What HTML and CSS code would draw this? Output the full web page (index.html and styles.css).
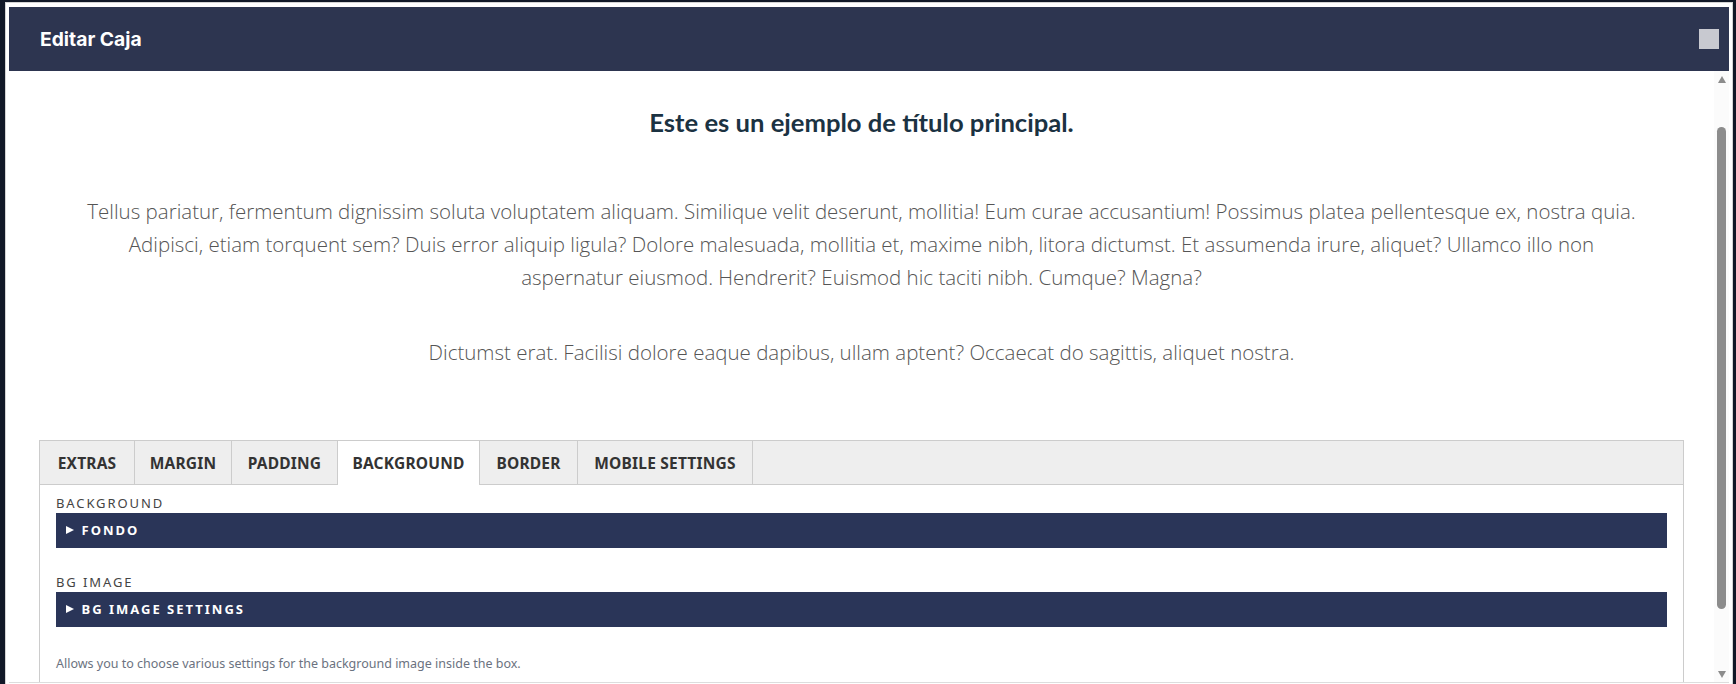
FILE: index.html
```html
<!DOCTYPE html>
<html lang="es">
<head>
<meta charset="utf-8">
<title>Editar Caja</title>
<link rel="stylesheet" href="styles.css">
</head>
<body>
<div class="modal">
  <header class="modal-head">
    <h1>Editar Caja</h1>
    <span class="close"></span>
  </header>
  <div class="modal-body">
    <div class="scroll-content">
      <h2>Este es un ejemplo de título principal.</h2>
      <p class="para first">Tellus pariatur, fermentum dignissim soluta voluptatem aliquam. Similique velit deserunt, mollitia! Eum curae accusantium! Possimus platea pellentesque ex, nostra quia. Adipisci, etiam torquent sem? Duis error aliquip ligula? Dolore malesuada, mollitia et, maxime nibh, litora dictumst. Et assumenda irure, aliquet? Ullamco illo non aspernatur eiusmod. Hendrerit? Euismod hic taciti nibh. Cumque? Magna?</p>
      <p class="para second">Dictumst erat. Facilisi dolore eaque dapibus, ullam aptent? Occaecat do sagittis, aliquet nostra.</p>
      <section class="panel">
        <nav class="tabs">
          <span class="tab">EXTRAS</span>
          <span class="tab">MARGIN</span>
          <span class="tab">PADDING</span>
          <span class="tab active">BACKGROUND</span>
          <span class="tab">BORDER</span>
          <span class="tab">MOBILE SETTINGS</span>
        </nav>
        <div class="panel-body">
          <div class="field-label">BACKGROUND</div>
          <div class="bar"><span class="arrow"></span>FONDO</div>
          <div class="field-label gap">BG IMAGE</div>
          <div class="bar"><span class="arrow"></span>BG IMAGE SETTINGS</div>
          <p class="help">Allows you to choose various settings for the background image inside the box.</p>
        </div>
      </section>
    </div>
    <div class="scrollbar">
      <span class="up"></span>
      <span class="track"><span class="thumb"></span></span>
      <span class="down"></span>
    </div>
  </div>
</div>
</body>
</html>
```
FILE: styles.css
```css
* { box-sizing: border-box; }
html, body { margin: 0; height: 100%; }
body {
  width: 1736px;
  height: 684px;
  overflow: hidden;
  background: #111827;
  padding: 2px 3px 0 5px;
}
.modal {
  height: 682px;
  background: #fff;
  border: 1px solid #d4d4d4;
  border-bottom: 0;
  padding: 4px 3px 1px 3px;
  display: flex;
  flex-direction: column;
}
.modal-head {
  height: 64px;
  flex: none;
  background: #2d3550;
  display: flex;
  align-items: center;
  justify-content: space-between;
  padding: 0 10px 0 31px;
}
.modal-head h1 {
  margin: 0;
  color: #fff;
  font: 700 19.3px "Inter", sans-serif;
}
.close { width: 20px; height: 20px; background: #c8c9d0; }
.modal-body {
  flex: 1;
  display: flex;
  min-height: 0;
  overflow: hidden;
  border-bottom: 1px solid #ddd;
}
.scroll-content {
  flex: 1;
  min-width: 0;
  padding: 0 30px;
}
h2 {
  margin: 33px 0 0;
  text-align: center;
  color: #1b3242;
  font: 700 25.6px/36px "Lato", sans-serif;
}
.para {
  margin: 0 auto;
  width: 1565px;
  text-align: center;
  color: #555;
  font: 300 20.5px/33px "Open Sans", sans-serif;
}
.first { margin-top: 55px; }
.second { margin-top: 42px; }
.panel {
  margin-top: 71px;
  border: 1px solid #ccc;
  border-bottom: 0;
  height: 260px;
}
.tabs {
  display: grid;
  grid-template-columns: 95px 97px 106px 142px 98px 175px;
  height: 44px;
  background: #eee;
  border-bottom: 1px solid #ccc;
}
.tab {
  height: 44px;
  display: flex;
  align-items: center;
  justify-content: center;
  border-right: 1px solid #ccc;
  color: #333;
  font: 700 15.5px "Noto Sans", sans-serif;
  letter-spacing: 0.2px;
}
.tab.active { background: #fff; }
.panel-body { padding: 8px 16px 0; }
.field-label {
  color: #444;
  font: 400 13px/20px "Noto Sans", sans-serif;
  letter-spacing: 1.9px;
}
.field-label.gap { margin-top: 24.5px; }
.bar {
  height: 34.5px;
  background: #2a3558;
  color: #fff;
  display: flex;
  align-items: center;
  padding-left: 10px;
  font: 700 13px "Noto Sans", sans-serif;
  letter-spacing: 2px;
}
.arrow {
  width: 0;
  height: 0;
  margin-right: 7.5px;
  border-left: 8px solid #fff;
  border-top: 4px solid transparent;
  border-bottom: 4px solid transparent;
}
.help {
  margin: 29.5px 0 0;
  color: #6b7280;
  font: 400 12.5px/16px "Noto Sans", sans-serif;
}
.scrollbar {
  width: 15px;
  flex: none;
  background: #fbfbfb;
  display: flex;
  flex-direction: column;
  align-items: center;
}
.up, .down { flex: none; width: 0; height: 0; border-left: 4.5px solid transparent; border-right: 4.5px solid transparent; }
.up { margin-top: 5px; border-bottom: 7px solid #8c8c8c; }
.down { margin-bottom: 4px; border-top: 7px solid #8c8c8c; }
.track { flex: 1; width: 100%; padding: 44px 3px 0; min-height: 0; }
.thumb { display: block; width: 9px; height: 482px; background: #8c8c8c; border-radius: 5px; }
```
